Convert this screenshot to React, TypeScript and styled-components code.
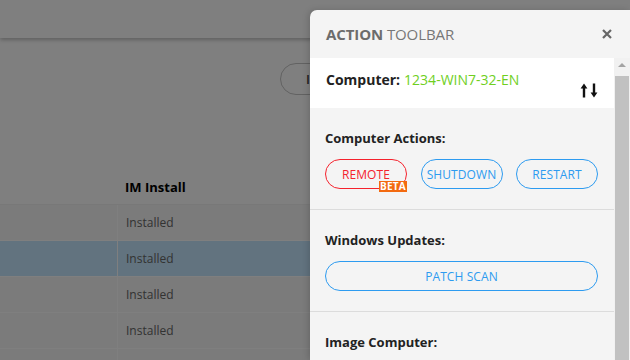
import React from "react";
import styled, { createGlobalStyle } from "styled-components";

const Global = createGlobalStyle`
  html, body { margin: 0; padding: 0; width: 630px; height: 360px; overflow: hidden; }
  body { font-family: "Open Sans", "Noto Sans", sans-serif; background: #fff; }
  * { box-sizing: border-box; }
`;

const Page = styled.div`
  position: relative;
  width: 630px;
  height: 360px;
  overflow: hidden;
  background: #ffffff;
`;

const TopBar = styled.div`
  height: 38px;
  background: #ffffff;
  box-shadow: 0 2px 4px rgba(0, 0, 0, 0.25);
`;

const ToolRow = styled.div`
  display: flex;
  justify-content: flex-end;
  padding: 25px 0 0 0;
  height: 132px;
`;

const GhostPill = styled.div`
  width: 160px;
  height: 32px;
  border: 1px solid #c4c4c4;
  border-radius: 16px;
  margin-right: 190px;
  display: flex;
  align-items: center;
  padding-left: 25px;
  font-size: 13px;
  font-weight: 600;
  color: #444;
`;

const Table = styled.div`
  display: flex;
  flex-direction: column;
`;

const HeadRow = styled.div`
  display: grid;
  grid-template-columns: 117px 1fr;
  height: 35px;
  align-items: center;
  border-bottom: 1px solid #f0f0f0;
`;

const HeadCell = styled.div`
  padding-left: 8px;
  font-size: 13px;
  font-weight: 700;
  color: #000;
`;

const Row = styled.div<{ $selected?: boolean }>`
  display: grid;
  grid-template-columns: 117px 1fr;
  height: 36px;
  background: ${(p) => (p.$selected ? "#c5e6ff" : "#f6f6f6")};
  border-bottom: 1px solid #ffffff;
`;

const Cell = styled.div<{ $divider?: boolean }>`
  display: flex;
  align-items: center;
  padding-left: 8px;
  font-size: 12px;
  color: #666;
  border-left: ${(p) => (p.$divider ? "1px solid #ffffff" : "none")};
`;

const Overlay = styled.div`
  position: absolute;
  inset: 0;
  background: rgba(0, 0, 0, 0.5);
`;

const Drawer = styled.aside`
  position: absolute;
  top: 10px;
  right: 0;
  bottom: 0;
  width: 320px;
  background: #f4f4f4;
  border-top-left-radius: 7px;
  display: flex;
  flex-direction: column;
  box-shadow: -2px 0 6px rgba(0, 0, 0, 0.15);
  overflow: hidden;
`;

const DrawerHeader = styled.div`
  height: 48px;
  display: flex;
  align-items: center;
  justify-content: space-between;
  padding: 0 17px 0 16px;
  flex-shrink: 0;
`;

const Title = styled.div`
  font-size: 15px;
  color: #777;
  letter-spacing: -0.1px;
  b { font-weight: 700; color: #6c6c6c; }
`;

const CloseBtn = styled.button`
  border: none;
  background: none;
  padding: 0;
  width: 12px;
  height: 12px;
  display: flex;
  cursor: pointer;
`;

const Body = styled.div`
  flex: 1;
  display: flex;
  min-height: 0;
`;

const Content = styled.div`
  flex: 1;
  overflow: hidden;
`;

const ComputerBar = styled.div`
  height: 50px;
  background: #ffffff;
  display: flex;
  align-items: center;
  justify-content: space-between;
  padding: 0 16px 0 16px;
`;

const ComputerLabel = styled.div`
  display: flex;
  align-items: baseline;
  gap: 4px;
  font-size: 14px;
  margin-top: -8px;
`;

const LabelKey = styled.span`
  font-weight: 700;
  color: #222;
`;

const HostName = styled.span`
  font-weight: 400;
  color: #6fcf1e;
`;

const SortIcon = styled.svg`
  margin-top: 14px;
`;

const Section = styled.section<{ $last?: boolean }>`
  padding: 21px 16px 20px 15px;
  border-bottom: ${(p) => (p.$last ? "none" : "1px solid #dcdcdc")};
`;

const SectionLabel = styled.div`
  font-size: 13px;
  font-weight: 700;
  color: #222;
  line-height: 18px;
  margin-bottom: 12px;
`;

const ButtonGrid = styled.div`
  display: grid;
  grid-template-columns: repeat(3, 1fr);
  column-gap: 13.5px;
`;

const PillButton = styled.button<{ $danger?: boolean }>`
  position: relative;
  height: 30px;
  width: 100%;
  border-radius: 15px;
  background: transparent;
  border: 1px solid ${(p) => (p.$danger ? "#f5222d" : "#2d9bf0")};
  color: ${(p) => (p.$danger ? "#f5222d" : "#2d9bf0")};
  font-family: "Open Sans", sans-serif;
  font-size: 12px;
  letter-spacing: 0.1px;
  padding: 0;
  cursor: pointer;
`;

const Beta = styled.span`
  position: absolute;
  right: -1px;
  bottom: -4px;
  width: 28px;
  height: 11px;
  background: #f36a10;
  color: #fff;
  font-size: 10px;
  font-weight: 700;
  line-height: 11px;
  text-align: center;
  letter-spacing: 0.2px;
`;

const ScrollTrack = styled.div`
  width: 16px;
  background: #f1f1f1;
  display: flex;
  flex-direction: column;
  align-items: center;
  padding-top: 5px;
`;

const ScrollArrow = styled.div`
  width: 0;
  height: 0;
  border-left: 4px solid transparent;
  border-right: 4px solid transparent;
  border-bottom: 4px solid #a3a3a3;
  margin-bottom: 9px;
`;

const ScrollThumb = styled.div`
  width: 14px;
  flex: 1;
  background: #c1c1c1;
`;

export default function App() {
  const rows = [
    { sel: false, text: "Installed" },
    { sel: true, text: "Installed" },
    { sel: false, text: "Installed" },
    { sel: false, text: "Installed" },
    { sel: false, text: "" },
  ];
  return (
    <>
      <Global />
      <Page>
        <TopBar />
        <ToolRow>
          <GhostPill>I</GhostPill>
        </ToolRow>
        <Table>
          <HeadRow>
            <HeadCell />
            <HeadCell>IM Install</HeadCell>
          </HeadRow>
          {rows.map((r, i) => (
            <Row key={i} $selected={r.sel}>
              <Cell />
              <Cell $divider>{r.text}</Cell>
            </Row>
          ))}
        </Table>
        <Overlay>
          <Drawer>
            <DrawerHeader>
              <Title>
                <b>ACTION</b> TOOLBAR
              </Title>
              <CloseBtn aria-label="close">
                <svg width="12" height="12" viewBox="0 0 12 12">
                  <path d="M2 2 L10 10 M10 2 L2 10" stroke="#666" strokeWidth="2.2" />
                </svg>
              </CloseBtn>
            </DrawerHeader>
            <Body>
              <Content>
                <ComputerBar>
                  <ComputerLabel>
                    <LabelKey>Computer:</LabelKey>
                    <HostName>1234-WIN7-32-EN</HostName>
                  </ComputerLabel>
                  <SortIcon width="18" height="15" viewBox="0 0 18 15">
                    <path d="M4 0.5 L0.6 5.4 H2.8 V14.5 H5.2 V5.4 H7.4 Z" fill="#111" />
                    <path d="M14 14.5 L10.6 9.6 H12.8 V0.5 H15.2 V9.6 H17.4 Z" fill="#111" />
                  </SortIcon>
                </ComputerBar>
                <Section>
                  <SectionLabel>Computer Actions:</SectionLabel>
                  <ButtonGrid>
                    <PillButton $danger>
                      REMOTE
                      <Beta>BETA</Beta>
                    </PillButton>
                    <PillButton>SHUTDOWN</PillButton>
                    <PillButton>RESTART</PillButton>
                  </ButtonGrid>
                </Section>
                <Section>
                  <SectionLabel>Windows Updates:</SectionLabel>
                  <PillButton>PATCH SCAN</PillButton>
                </Section>
                <Section $last>
                  <SectionLabel>Image Computer:</SectionLabel>
                </Section>
              </Content>
              <ScrollTrack>
                <ScrollArrow />
                <ScrollThumb />
              </ScrollTrack>
            </Body>
          </Drawer>
        </Overlay>
      </Page>
    </>
  );
}
